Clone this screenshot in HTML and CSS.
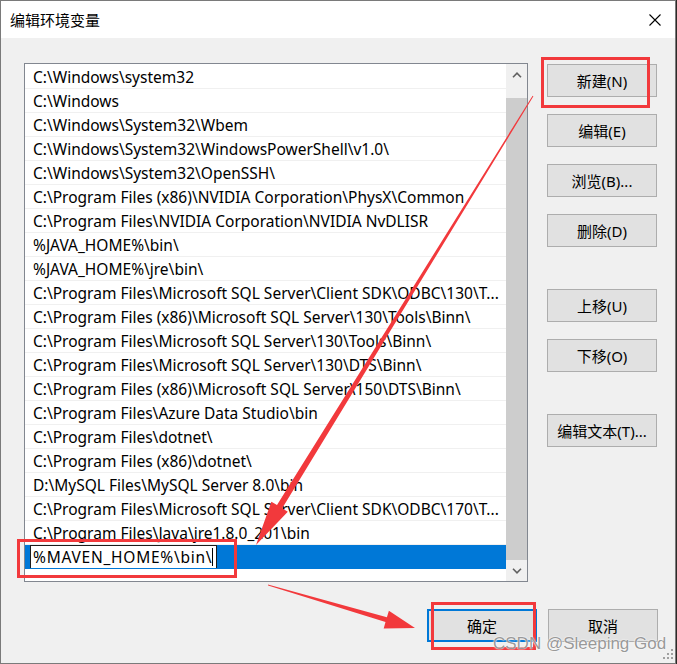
FILE: index.html
```html
<!DOCTYPE html>
<html lang="zh-CN">
<head>
<meta charset="utf-8">
<title>编辑环境变量</title>
<link rel="stylesheet" href="styles.css">
</head>
<body>
<div class="window">
  <div class="titlebar">
    <span class="title">编辑环境变量</span>
    <span class="close">
      <svg width="12" height="12" viewBox="0 0 12 12"><path d="M0.5 0.5 L11.5 11.5 M11.5 0.5 L0.5 11.5" stroke="#000" stroke-width="1.1" fill="none"/></svg>
    </span>
  </div>
  <div class="content">
    <div class="listbox">
      <div class="rows">
        <div class="row">C:\Windows\system32</div>
        <div class="row">C:\Windows</div>
        <div class="row">C:\Windows\System32\Wbem</div>
        <div class="row">C:\Windows\System32\WindowsPowerShell\v1.0\</div>
        <div class="row">C:\Windows\System32\OpenSSH\</div>
        <div class="row">C:\Program Files (x86)\NVIDIA Corporation\PhysX\Common</div>
        <div class="row">C:\Program Files\NVIDIA Corporation\NVIDIA NvDLISR</div>
        <div class="row">%JAVA_HOME%\bin\</div>
        <div class="row">%JAVA_HOME%\jre\bin\</div>
        <div class="row">C:\Program Files\Microsoft SQL Server\Client SDK\ODBC\130\T...</div>
        <div class="row">C:\Program Files (x86)\Microsoft SQL Server\130\Tools\Binn\</div>
        <div class="row">C:\Program Files\Microsoft SQL Server\130\Tools\Binn\</div>
        <div class="row">C:\Program Files\Microsoft SQL Server\130\DTS\Binn\</div>
        <div class="row">C:\Program Files (x86)\Microsoft SQL Server\150\DTS\Binn\</div>
        <div class="row">C:\Program Files\Azure Data Studio\bin</div>
        <div class="row">C:\Program Files\dotnet\</div>
        <div class="row">C:\Program Files (x86)\dotnet\</div>
        <div class="row">D:\MySQL Files\MySQL Server 8.0\bin</div>
        <div class="row">C:\Program Files\Microsoft SQL Server\Client SDK\ODBC\170\T...</div>
        <div class="row">C:\Program Files\Java\jre1.8.0_201\bin</div>
        <div class="row selected">
          <div class="editbox"><span class="edit-text">%MAVEN_HOME%\bin\</span><span class="caret"></span></div>
        </div>
      </div>
      <div class="scrollbar">
        <div class="sb-btn">
          <svg width="10" height="6" viewBox="0 0 10 6"><path d="M1 5.2 L5 1.2 L9 5.2" stroke="#606060" stroke-width="1.6" fill="none"/></svg>
        </div>
        <div class="sb-track"><div class="sb-thumb"></div></div>
        <div class="sb-btn">
          <svg width="10" height="6" viewBox="0 0 10 6"><path d="M1 0.8 L5 4.8 L9 0.8" stroke="#606060" stroke-width="1.6" fill="none"/></svg>
        </div>
      </div>
    </div>
    <div class="side">
      <div class="btn">新建(N)</div>
      <div class="btn">编辑(E)</div>
      <div class="btn">浏览(B)...</div>
      <div class="btn">删除(D)</div>
      <div class="btn gap-lg">上移(U)</div>
      <div class="btn">下移(O)</div>
      <div class="btn gap-lg">编辑文本(T)...</div>
    </div>
  </div>
  <div class="footer">
    <div class="btn default">确定</div>
    <div class="btn">取消</div>
  </div>
  <div class="grip">
    <i class="dot d1"></i><i class="dot d2"></i><i class="dot d3"></i><i class="dot d4"></i><i class="dot d5"></i><i class="dot d6"></i>
  </div>
  <svg class="annot" width="677" height="664" viewBox="0 0 677 664">
    <g fill="none" stroke="#f2393c" stroke-width="3">
      <rect x="542.5" y="58.5" width="106" height="48"/>
      <rect x="18.5" y="540.5" width="217" height="36"/>
      <rect x="432.5" y="603.5" width="102" height="45"/>
    </g>
    <g fill="#f2393c">
      <polygon points="533.4,96.3 282.2,508.3 287.8,511.7 256,545 271.4,501.7 277.0,505.1 532.6,95.7"/>
      <polygon points="268.1,585.5 385.5,622.0 383.7,628.4 415,628 388.9,610.8 386.9,617.2 267.9,584.5"/>
    </g>
  </svg>
  <span class="watermark">CSDN @Sleeping God</span>
</div>
</body>
</html>
```

FILE: styles.css
```css
* {
  box-sizing: border-box;
}

html,
body {
  margin: 0;
  padding: 0;
}

body {
  width: 677px;
  height: 664px;
  overflow: hidden;
  background: #2e2a28;
  font-family: "Noto Sans", "Noto Sans CJK SC", sans-serif;
  color: #000;
}

.window {
  position: relative;
  width: 676px;
  height: 664px;
  border: 1px solid #7a7a7a;
  background: #f0f0f0;
  display: flex;
  flex-direction: column;
}

.titlebar {
  height: 37px;
  flex: none;
  background: #fff;
  display: flex;
  align-items: center;
  justify-content: space-between;
  padding-left: 9px;
}

.title {
  font-family: "Noto Sans CJK SC", sans-serif;
  font-size: 15px;
  line-height: 20px;
}

.close {
  width: 40px;
  height: 37px;
  display: flex;
  align-items: center;
  justify-content: center;
}

.content {
  display: grid;
  grid-template-columns: 504px 110px;
  column-gap: 19px;
  padding: 25px 18px 0 23px;
}

.listbox {
  height: 519px;
  border: 1px solid #828790;
  background: #fff;
  display: flex;
}

.rows {
  width: 481px;
  flex: none;
  padding-top: 1px;
}

.row {
  height: 24px;
  line-height: 24px;
  padding-left: 8px;
  border-bottom: 1px solid #f0f0f0;
  font-size: 15.5px;
  white-space: nowrap;
  overflow: hidden;
}

.row.selected {
  background: #0078d7;
  padding-left: 5px;
  border-bottom-color: #0078d7;
}

.editbox {
  width: 187px;
  height: 24px;
  border: 1px solid #1c1c1c;
  background: #fff;
  padding-left: 2px;
  display: flex;
  align-items: center;
  line-height: 20px;
}

.edit-text {
  letter-spacing: 0.75px;
}

.caret {
  width: 1px;
  height: 18px;
  background: #000;
}

.scrollbar {
  width: 21px;
  flex: none;
  background: #f0f0f0;
  display: flex;
  flex-direction: column;
}

.sb-btn {
  height: 21px;
  flex: none;
  display: flex;
  align-items: center;
  justify-content: center;
}

.sb-track {
  flex: 1;
  display: flex;
  flex-direction: column;
  padding-top: 13px;
}

.sb-thumb {
  flex: 1;
  background: #cdcdcd;
}

.side {
  display: flex;
  flex-direction: column;
  padding-top: 1px;
}

.btn {
  width: 110px;
  height: 33px;
  flex: none;
  border: 1px solid #adadad;
  background: #e1e1e1;
  font-size: 15px;
  display: flex;
  align-items: center;
  justify-content: center;
  white-space: nowrap;
}

.side .btn + .btn {
  margin-top: 17px;
}

.side .btn.gap-lg {
  margin-top: 42px;
}

.footer {
  display: flex;
  justify-content: flex-end;
  gap: 11px;
  padding: 27px 17px 0 0;
}

.btn.default {
  border: 2px solid #0078d7;
}

.grip {
  position: absolute;
  right: 2px;
  bottom: 2px;
  width: 12px;
  height: 12px;
}

.dot {
  position: absolute;
  width: 2px;
  height: 2px;
  background: #a0a0a0;
}

.d1 { right: 0; top: 0; }
.d2 { right: 4px; top: 4px; }
.d3 { right: 0; top: 4px; }
.d4 { right: 8px; top: 8px; }
.d5 { right: 4px; top: 8px; }
.d6 { right: 0; top: 8px; }

.annot {
  position: absolute;
  left: -1px;
  top: -1px;
  pointer-events: none;
}

.watermark {
  position: absolute;
  left: 492px;
  top: 633px;
  font-family: "Liberation Sans", Arial, sans-serif;
  font-size: 17px;
  color: rgba(125, 125, 125, 0.8);
  text-shadow: 0 0 2px #fff, 0 0 1px #fff;
  white-space: nowrap;
}
```
